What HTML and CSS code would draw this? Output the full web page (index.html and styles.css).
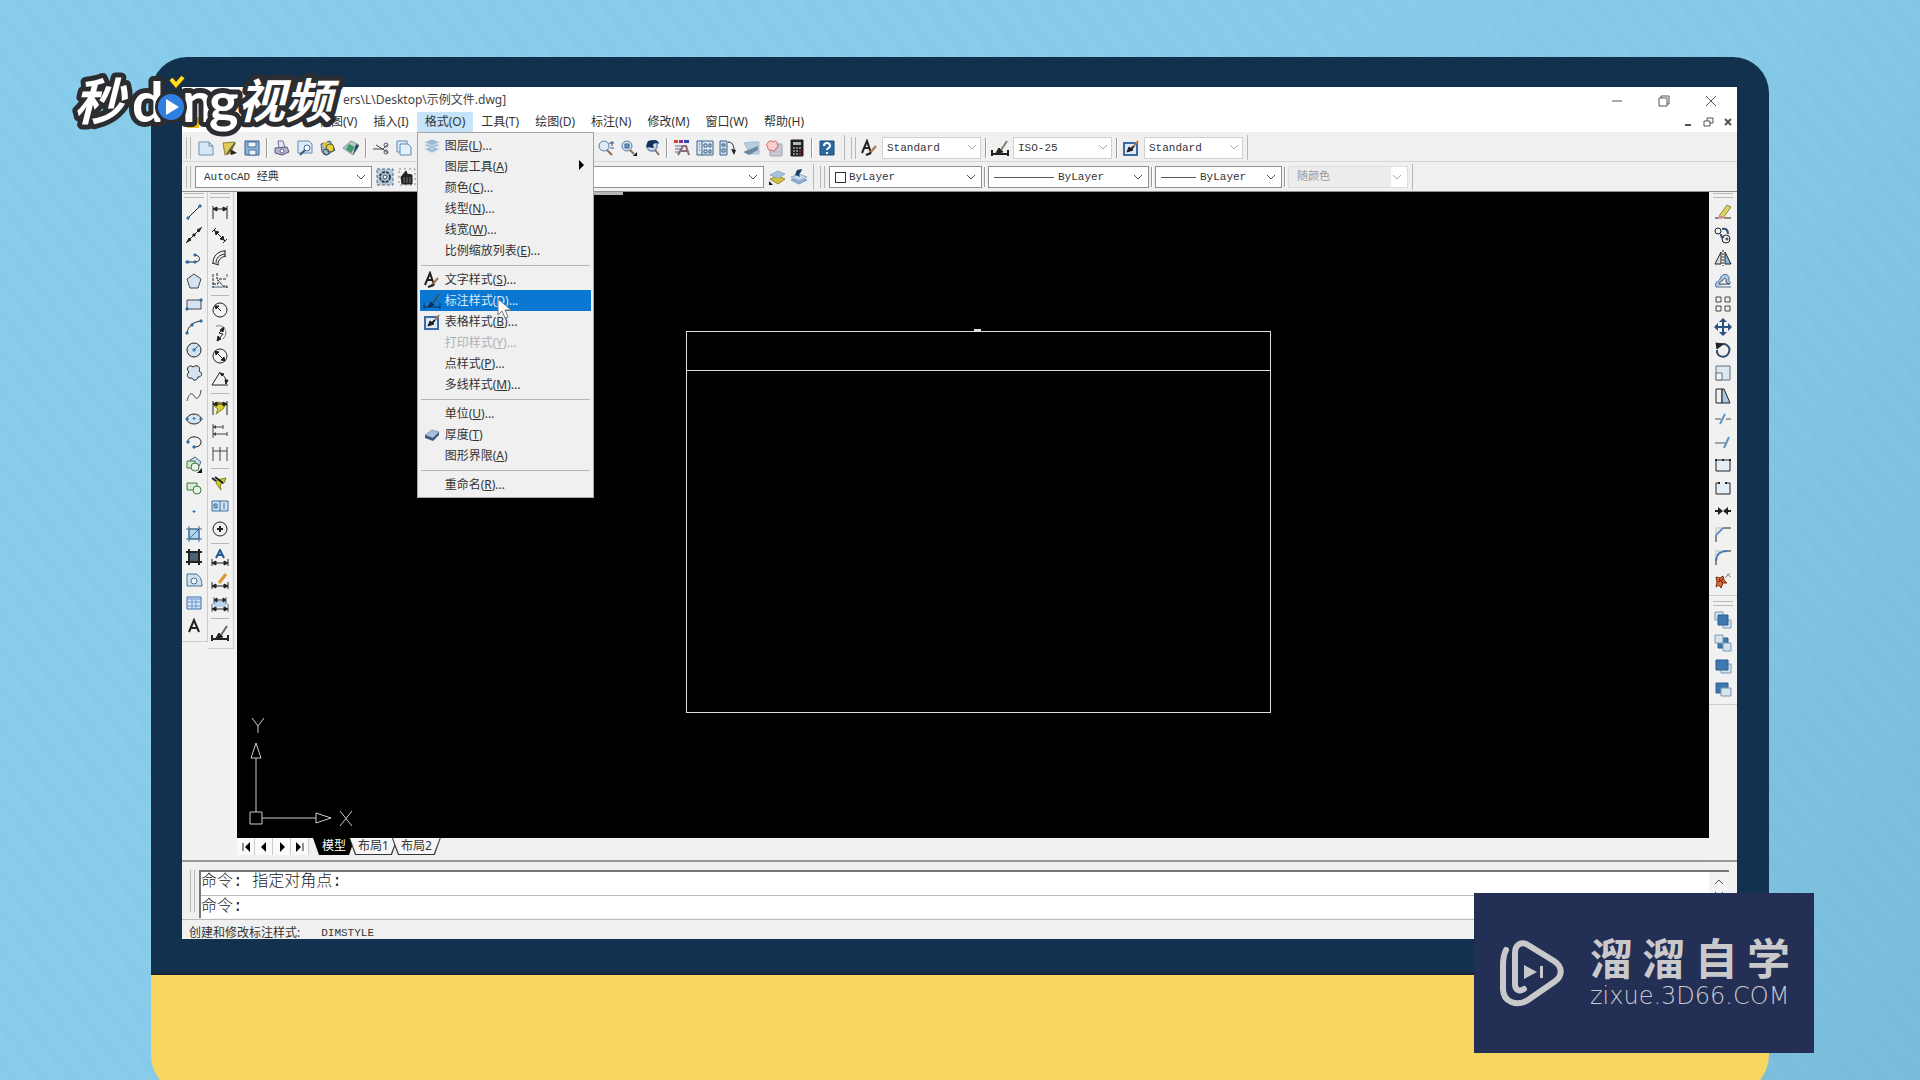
FILE: index.html
```html
<!DOCTYPE html>
<html lang="zh-CN">
<head>
<meta charset="utf-8">
<title>AutoCAD 示例文件.dwg</title>
<link rel="stylesheet" href="styles.css">
</head>
<body>
<div class="desk">
  <div class="bezel">
    <main class="screen">
      <header class="titlebar">
        <h1 class="title">ers\L\Desktop\示例文件.dwg]</h1>
        <div class="window-controls">
          <button aria-label="最小化"><svg class="ico"><path d="M4 9h10"/></svg></button>
          <button aria-label="还原"><svg class="ico"><path d="M4 6h8v8H4zM6 6V4h8v8h-2"/></svg></button>
          <button aria-label="关闭"><svg class="ico"><path d="M4 4l10 10M14 4L4 14"/></svg></button>
        </div>
      </header>

      <nav class="menubar">
        <svg class="ico app-icon"><path d="M2 4h12v11H2z" fill="#f0b81c" stroke="none"/></svg>
        <button class="menu">视图(V)</button>
        <button class="menu">插入(I)</button>
        <div class="menu-holder">
          <button class="menu open">格式(O)</button>
          <div class="dropdown">
            <button class="item"><svg class="ico"><g fill="#9cb9d3" stroke="#dfe9f2"><path d="M1 12l8-3 8 3-8 4z"/><path d="M1 8l8-3 8 3-8 4z"/><path d="M1 5l8-3 8 3-8 4z"/></g></svg>图层(<u>L</u>)...</button>
            <button class="item sub"><span class="ico"></span>图层工具(<u>A</u>)<svg class="arrow"><path d="M1 0l5 5-5 5z"/></svg></button>
            <button class="item"><span class="ico"></span>颜色(<u>C</u>)...</button>
            <button class="item"><span class="ico"></span>线型(<u>N</u>)...</button>
            <button class="item"><span class="ico"></span>线宽(<u>W</u>)...</button>
            <button class="item"><span class="ico"></span>比例缩放列表(<u>E</u>)...</button>
            <hr>
            <button class="item"><svg class="ico"><path d="M2 14L7 2l4 12M4 9h6" stroke-width="2"/><path d="M8 15l7-8" stroke="#a8754c" stroke-width="2"/><path d="M5 16l6-2" stroke-width="2"/></svg>文字样式(<u>S</u>)...</button>
            <button class="item active"><svg class="ico"><path d="M1 11v6M17 11v6M1 15h16" stroke="#0b2d50"/><path d="M5 15l3-5 3 3z" fill="#0b2d50" stroke="#0b2d50"/><path d="M10 11l6-9" stroke="#31566a" stroke-width="2"/></svg>标注样式(<u>D</u>)...
              <svg class="cursor"><path d="M1 1v16l4-4 3 7 3-1-3-7h6z"/></svg></button>
            <button class="item"><svg class="ico"><path d="M2 4h13v12H2z" fill="#dce9f8" stroke="#3c6aa8" stroke-width="2"/><path d="M5 13l2-5 4 3z" fill="#222"/><path d="M8 11l4-4" stroke-width="2"/><path d="M12 7l4-5" stroke="#ad784c" stroke-width="2"/></svg>表格样式(<u>B</u>)...</button>
            <button class="item" disabled><span class="ico"></span>打印样式(<u>Y</u>)...</button>
            <button class="item"><span class="ico"></span>点样式(<u>P</u>)...</button>
            <button class="item"><span class="ico"></span>多线样式(<u>M</u>)...</button>
            <hr>
            <button class="item"><span class="ico"></span>单位(<u>U</u>)...</button>
            <button class="item"><svg class="ico"><path d="M2 9l7-5 7 2-6 6z" fill="#a9bfdb" stroke="#8aa2c4"/><path d="M2 9v3l8 3 6-6V6l-6 6z" fill="#40597f" stroke="none"/></svg>厚度(<u>T</u>)</button>
            <button class="item"><span class="ico"></span>图形界限(<u>A</u>)</button>
            <hr>
            <button class="item"><span class="ico"></span>重命名(<u>R</u>)...</button>
          </div>
        </div>
        <button class="menu">工具(T)</button>
        <button class="menu">绘图(D)</button>
        <button class="menu">标注(N)</button>
        <button class="menu">修改(M)</button>
        <button class="menu">窗口(W)</button>
        <button class="menu">帮助(H)</button>
        <div class="doc-controls">
          <button aria-label="最小化文档"><svg class="ico"><path d="M6 12h6" stroke-width="2"/></svg></button>
          <button aria-label="还原文档"><svg class="ico"><path d="M5 8h6v5H5zM8 8V5h6v5h-3"/></svg></button>
          <button aria-label="关闭文档"><svg class="ico"><path d="M6 6l6 6M12 6l-6 6" stroke-width="2"/></svg></button>
        </div>
      </nav>

      <div class="toolbar-row">
        <div class="toolbar standard">
          <i class="grip"></i>
          <button class="tool" aria-label="新建"><svg class="ico"><path d="M2 3h10l4 4v9H2z" fill="#d5e7f5" stroke="#6d93b8"/><path d="M12 3v4h4" stroke="#6d93b8"/></svg></button>
          <button class="tool" aria-label="打开"><svg class="ico"><path d="M3 4l12-1-4 11-6 2z" fill="#e3c95c" stroke="#8d8038"/><path d="M7 15l8-11" stroke="#5a6b3a" stroke-width="2"/><path d="M10 10l7 4-6 2z" fill="#222" stroke="none"/></svg></button>
          <button class="tool" aria-label="保存"><svg class="ico"><path d="M2 2h14v14H2z" fill="#8fb3d9" stroke="#355f93"/><path d="M5 3h8v5H5zM6 11h7v5H6z" fill="#eef4fa" stroke="#45709f"/></svg></button>
          <i class="sep"></i>
          <button class="tool" aria-label="打印"><svg class="ico"><path d="M5 2h5l2 7H6z" fill="#dce6f4" stroke="#6e7690"/><path d="M2 9l12-1 2 5-7 3-7-2z" fill="#b4b6cc" stroke="#56597a"/><circle cx="9" cy="12" r="2" fill="#fff" stroke="#63668a"/></svg></button>
          <button class="tool" aria-label="打印预览"><svg class="ico"><path d="M2 2h11l3 3v9H2z" fill="#dcebf7" stroke="#5f8bb5"/><circle cx="11" cy="9" r="3" fill="#f6fbff" stroke="#406b97"/><path d="M9 11l-5 5" stroke="#495566" stroke-width="2"/></svg></button>
          <button class="tool" aria-label="发布"><svg class="ico"><path d="M2 5l9-3 5 9-8 5-5-3z" fill="#9fb8c8" stroke="#4a5d78"/><path d="M4 3h5v5H4z" fill="#edbf2f" stroke="none"/><circle cx="11" cy="9" r="4" fill="#e7d23c" stroke="#56603a"/><circle cx="7" cy="13" r="3" stroke="#3b4f70"/></svg></button>
          <button class="tool" aria-label="三维打印"><svg class="ico"><path d="M1 9l8-7 8 4-6 10z" fill="#b5cbd3" stroke="#7e97a3"/><path d="M7 5l6 3-4 6-5-4z" fill="#3f9c6a" stroke="none"/><path d="M11 16l6-9-3-2z" fill="#2c445c" stroke="none"/></svg></button>
          <i class="sep"></i>
          <button class="tool" aria-label="剪切"><svg class="ico"><path d="M1 10h10l4-4M4 6l8 5 4 3" stroke="#444"/><circle cx="14" cy="6" r="2" stroke="#5a5470"/><circle cx="14" cy="13" r="2" stroke="#5a5470"/></svg></button>
          <button class="tool" aria-label="复制"><svg class="ico"><path d="M2 2h10v11H2z" fill="#dcebf7" stroke="#5d89b3"/><path d="M5 5h8l3 3v8H5z" fill="#e3f0fa" stroke="#5d89b3"/></svg></button>
          <button class="tool" aria-label="粘贴"><svg class="ico"><path d="M3 3h12v13H3z"/></svg></button>
          <button class="tool" aria-label="特性匹配"><svg class="ico"><path d="M3 15L15 3"/></svg></button>
          <button class="tool" aria-label="块编辑器"><svg class="ico"><path d="M4 4h10v10H4z"/></svg></button>
          <i class="sep"></i>
          <button class="tool wide" aria-label="放弃"><svg class="ico"><path d="M3 8c6-5 10-2 11 5"/></svg></button>
          <button class="tool wide" aria-label="重做"><svg class="ico"><path d="M15 8c-6-5-10-2-11 5"/></svg></button>
          <i class="sep"></i>
          <button class="tool" aria-label="平移"><svg class="ico"><path d="M9 2v14M2 9h14"/></svg></button>
          <button class="tool" aria-label="缩放"><svg class="ico"><circle cx="8" cy="8" r="5"/></svg></button>
          <button class="tool" aria-label="实时缩放"><svg class="ico"><circle cx="7" cy="7" r="5" fill="#dcebf7" stroke="#5b7fa4"/><path d="M10 11l5 5" stroke="#8c6f58" stroke-width="2"/><path d="M12 4h5M15 2v5M13 9h4" stroke="#35537c"/></svg></button>
          <button class="tool" aria-label="窗口缩放"><svg class="ico"><circle cx="7" cy="7" r="5" fill="#cfe1f1" stroke="#5b7fa4"/><path d="M5 5h4v4H5z" fill="#6f95bb" stroke="#3c6592"/><path d="M10 11l4 4" stroke="#8c6f58" stroke-width="2"/><path d="M17 13v4h-4z" fill="#111" stroke="none"/></svg></button>
          <button class="tool" aria-label="缩放上一个"><svg class="ico"><circle cx="9" cy="7" r="5" fill="#cfe1f1" stroke="#7e9abb" stroke-width="2"/><path d="M12 11l4 5" stroke="#8c6f58" stroke-width="2"/><path d="M3 8l2-6 6-1c3 0 5 2 5 4-3-2-5-1-6 1l1 3z" fill="#16305c" stroke="none"/></svg></button>
          <i class="sep"></i>
          <button class="tool" aria-label="特性"><svg class="ico"><path d="M1 1h4v3H1z" fill="#d5442d" stroke="none"/><path d="M6 1h4v3H6z" fill="#8c2f96" stroke="none"/><path d="M11 1h5v3h-5z" fill="#2f49b0" stroke="none"/><path d="M2 7h7M2 10h6M2 13h5" stroke="#536a8a"/><path d="M5 16l5-9h3l3 9M8 12h7" stroke="#8a6a72" stroke-width="2"/></svg></button>
          <button class="tool" aria-label="设计中心"><svg class="ico"><path d="M1 2h16v14H1z" fill="#d8e7f3" stroke="#3f6184"/><path d="M6 2v14M8 5h3v3H8zM13 5h2v3h-2zM8 11h3v3H8zM13 11h2v3h-2zM3 5h1M3 8h1M3 11h1" stroke="#3f6184"/></svg></button>
          <button class="tool" aria-label="工具选项板"><svg class="ico"><path d="M1 2h7v14H1z" fill="#c9dcec" stroke="#3f6184"/><path d="M3 5h3v2H3zM3 10h3v3H3z" stroke="#3f6184"/><path d="M9 3c4 0 6 3 6 8" stroke="#222"/><path d="M12 10l5 1-2 5z" fill="#222" stroke="none"/></svg></button>
          <button class="tool" aria-label="图纸集"><svg class="ico"><path d="M2 4l8-1h7v12H8z" fill="#b9cddc" stroke="#a9bccb"/><path d="M1 13l15-6v4L7 16z" fill="#6b8aa4" stroke="none"/></svg></button>
          <button class="tool" aria-label="标记集"><svg class="ico"><path d="M5 5h12v12H5z" fill="#c8c9d0" stroke="#a3a5b0"/><path d="M3 4c1-3 4-2 5-1 2-2 5 0 4 2 2 2 1 4-1 4 0 3-3 4-4 2-3 1-5-1-4-3-2-1-2-3 0-4z" fill="#f6cfcf" stroke="#d0525a"/></svg></button>
          <button class="tool" aria-label="快速计算器"><svg class="ico"><path d="M3 1h12v16H3z" fill="#222"/><path d="M5 3h8v3H5z" fill="#a9bfae" stroke="none"/><path d="M5 9h2M8 9h2M11 9h2M5 12h2M8 12h2M5 15h2M8 15h2" stroke="#ddd"/><path d="M11 12h2M11 15h2" stroke="#d33"/></svg></button>
          <i class="sep"></i>
          <button class="tool" aria-label="帮助"><svg class="ico"><path d="M2 2h14v14H2z" fill="#2b6a9e" stroke="#174a75"/><path d="M6 7c0-4 6-4 6 0 0 2-3 2-3 4M9 13v2" stroke="#fff" stroke-width="2"/></svg></button>
        </div>
        <div class="toolbar">
          <i class="grip"></i>
          <button class="tool" aria-label="文字样式"><svg class="ico"><path d="M2 14L7 2l4 12M4 9h6" stroke-width="2"/><path d="M9 15l7-8" stroke="#a8754c" stroke-width="2"/><path d="M6 16l5-2" stroke-width="2"/></svg></button>
          <div class="combo style"><select aria-label="当前文字样式"><option>Standard</option></select><svg class="chev pale"><path d="M1 1l4 4 4-4"/></svg></div>
          <i class="sep"></i>
          <button class="tool" aria-label="标注样式"><svg class="ico"><path d="M1 11v6M17 11v6M1 15h16" stroke-width="2"/><path d="M5 14l3-5 4 4z" fill="#222"/><path d="M10 11l6-9" stroke="#75856a" stroke-width="2"/></svg></button>
          <div class="combo style"><select aria-label="当前标注样式"><option>ISO-25</option></select><svg class="chev pale"><path d="M1 1l4 4 4-4"/></svg></div>
          <i class="sep"></i>
          <button class="tool" aria-label="表格样式"><svg class="ico"><path d="M2 4h13v12H2z" fill="#dce9f8" stroke="#3c6aa8" stroke-width="2"/><path d="M5 13l2-5 4 3z" fill="#222"/><path d="M8 11l4-4" stroke-width="2"/><path d="M12 7l4-5" stroke="#ad784c" stroke-width="2"/></svg></button>
          <div class="combo style"><select aria-label="当前表格样式"><option>Standard</option></select><svg class="chev pale"><path d="M1 1l4 4 4-4"/></svg></div>
        </div>
      </div>

      <div class="toolbar-row second">
        <div class="toolbar">
          <i class="grip"></i>
          <div class="combo workspace-name"><select aria-label="工作空间"><option>AutoCAD 经典</option></select><svg class="chev"><path d="M1 1l4 4 4-4"/></svg></div>
          <button class="tool" aria-label="工作空间设置"><svg class="ico"><path d="M1 1h16v16H1z" fill="#b9cbdb" stroke="#54687c" stroke-dasharray="3 2"/><circle cx="9" cy="9" r="5" stroke="#2f4358" stroke-width="2" stroke-dasharray="3 1"/><circle cx="9" cy="9" r="2" fill="#fff" stroke="#2f4358"/></svg></button>
          <button class="tool" aria-label="我的工作空间"><svg class="ico"><path d="M1 1h16v16H1z" stroke="#888" stroke-dasharray="2 3"/><path d="M3 9l5-6 1 3 5 1v9H4z" fill="#222"/><path d="M6 9v6M9 9v6M12 9v6" stroke="#777"/></svg></button>
        </div>
        <div class="toolbar layers">
          <i class="grip"></i>
          <div class="combo layer-name"><select aria-label="图层"><option></option></select><svg class="chev"><path d="M1 1l4 4 4-4"/></svg></div>
          <button class="tool" aria-label="置为当前图层"><svg class="ico"><path d="M2 11l8-3 7 3-7 5z" fill="#cfc23c" stroke="#938b30"/><path d="M2 7l8-4 7 3-7 4z" fill="#a9c3dc" stroke="#8fabc6"/><path d="M1 17v-4l4 4z" fill="#111" stroke="none"/></svg></button>
          <button class="tool" aria-label="上一个图层"><svg class="ico"><path d="M1 12l8-3 8 3-8 4z" fill="#8fb0d0" stroke="#7b9cbf"/><path d="M1 9l8-3 8 3-8 4z" fill="#c7d9ea" stroke="#93adc6"/><path d="M5 7l2-5 5-1-1 3c-2 1-2 3-1 5L8 8z" fill="#1f3f6d" stroke="none"/></svg></button>
        </div>
        <div class="toolbar">
          <i class="grip"></i>
          <div class="combo color"><span class="swatch"></span><select aria-label="颜色"><option>ByLayer</option></select><svg class="chev"><path d="M1 1l4 4 4-4"/></svg></div>
          <i class="sep"></i>
          <div class="combo linetype"><span class="line"></span><select aria-label="线型"><option>ByLayer</option></select><svg class="chev"><path d="M1 1l4 4 4-4"/></svg></div>
          <i class="sep"></i>
          <div class="combo lineweight"><span class="line"></span><select aria-label="线宽"><option>ByLayer</option></select><svg class="chev"><path d="M1 1l4 4 4-4"/></svg></div>
          <i class="sep"></i>
          <div class="combo plot"><select aria-label="打印样式" disabled><option>随颜色</option></select><svg class="chev pale"><path d="M1 1l4 4 4-4"/></svg></div>
        </div>
      </div>

      <div class="workspace">
        <aside class="dock left">
          <div class="tools">
            <i class="grip-h"></i>
            <button class="tool" aria-label="直线"><svg class="ico"><path d="M3 15L15 3"/><path d="M2 14h2v2H2zM14 2h2v2h-2z" fill="#2b6ca8" stroke="#2b6ca8"/></svg></button>
            <button class="tool" aria-label="构造线"><svg class="ico"><path d="M1 17L17 1"/><path d="M2 16l2-4 2 2zM16 2l-2 4-2-2zM8 8h2v2H8z" fill="#222"/></svg></button>
            <button class="tool" aria-label="多段线"><svg class="ico"><path d="M2 13h8c7 0 5-7 0-7"/><path d="M1 12h3v2H1zM9 12h2v2H9zM9 5h2v2H9z" fill="#2b6ca8" stroke="#2b6ca8"/></svg></button>
            <button class="tool" aria-label="多边形"><svg class="ico"><path d="M9 2l7 5-3 9H5L2 7z" fill="#d4e3ef" stroke="#445"/></svg></button>
            <button class="tool" aria-label="矩形"><svg class="ico"><path d="M2 5h14v9H2z" fill="#d4e3ef" stroke="#445"/><path d="M1 13h2v2H1zM15 4h2v2h-2z" fill="#2b6ca8" stroke="#2b6ca8"/></svg></button>
            <button class="tool" aria-label="圆弧"><svg class="ico"><path d="M2 15C3 8 8 4 16 3"/><path d="M1 14h2v2H1zM6 6h2v2H6zM15 2h2v2h-2z" fill="#2b6ca8" stroke="#2b6ca8"/></svg></button>
            <button class="tool" aria-label="圆"><svg class="ico"><circle cx="9" cy="9" r="7" fill="#d4e3ef"/><path d="M9 9l4-4M8 8h2v2H8z" stroke="#2b6ca8"/></svg></button>
            <button class="tool" aria-label="修订云线"><svg class="ico"><path d="M4 8C0 4 5 0 8 3c4-3 8 0 6 4 4 2 3 6-1 6-1 4-5 4-6 1-5 1-6-3-3-6z" fill="#d4e3ef"/></svg></button>
            <button class="tool" aria-label="样条曲线"><svg class="ico"><path d="M2 14C4 6 7 5 9 9s6 3 7-6" stroke="#445"/></svg></button>
            <button class="tool" aria-label="椭圆"><svg class="ico"><ellipse cx="9" cy="9" rx="7" ry="5" fill="#d4e3ef"/><path d="M1 8h2v2H1zM15 8h2v2h-2zM8 8h2v1H8z" stroke="#2b6ca8"/></svg></button>
            <button class="tool" aria-label="椭圆弧"><svg class="ico"><path d="M3 9c-1-7 14-7 13 1-1 3-3 4-7 4"/><path d="M2 8h2v2H2zM8 13h2v2H8z" fill="#2b6ca8" stroke="#2b6ca8"/></svg></button>
            <button class="tool" aria-label="插入块"><svg class="ico"><path d="M5 4l5-3 6 5-3 6z" fill="#c7dcec" stroke="#456c88"/><path d="M2 5h8v7H2z" fill="#d6e9d1" stroke="#417a41"/><circle cx="10" cy="11" r="4" fill="#eaf3e6" stroke="#3c7a48"/><path d="M17 12v5h-5z" fill="#111" stroke="none"/></svg></button>
            <button class="tool" aria-label="创建块"><svg class="ico"><path d="M2 4h10v7H2z" fill="#d6e9d1" stroke="#417a41"/><circle cx="12" cy="11" r="4" fill="#eaf3e6" stroke="#3c7a48"/></svg></button>
            <button class="tool" aria-label="点"><svg class="ico"><path d="M8 9h2v1H8z" fill="#2b6ca8" stroke="#2b6ca8"/></svg></button>
            <button class="tool" aria-label="图案填充"><svg class="ico"><path d="M4 4h10v10H4z" fill="#b6d2ea" stroke="#3e6c97"/><path d="M4 1v16M14 1v16M1 4h16M1 14h16M5 13l9-9" stroke="#3e6c97"/></svg></button>
            <button class="tool" aria-label="渐变色"><svg class="ico"><path d="M4 4h10v10H4z" fill="#4d6078"/><path d="M4 1v16M14 1v16M1 4h16M1 14h16" stroke-width="2"/></svg></button>
            <button class="tool" aria-label="面域"><svg class="ico"><path d="M2 3h9c3 1 6 5 6 12H2z" fill="#cfe0ef" stroke="#49708f"/><circle cx="9" cy="10" r="3" fill="#f4f8fb" stroke="#49708f"/></svg></button>
            <button class="tool" aria-label="表格"><svg class="ico"><path d="M2 3h14v12H2z" fill="#d7e6f7" stroke="#3f6fae"/><path d="M2 5h14M2 8h14M2 12h14M7 5v10M11 5v10" stroke="#6d97cc"/></svg></button>
            <button class="tool" aria-label="多行文字"><svg class="ico"><path d="M4 15L9 3l5 12M6 11h6" stroke-width="2"/></svg></button>
          </div>
          <div class="tools">
            <i class="grip-h"></i>
            <button class="tool" aria-label="线性标注"><svg class="ico"><path d="M2 3v13M16 3v13M2 6h14"/><path d="M2 6l4-2v4zM16 6l-4-2v4z" fill="#222"/></svg></button>
            <button class="tool" aria-label="对齐标注"><svg class="ico"><path d="M1 6l4-4M12 17l4-4M3 4l11 11"/><path d="M4 5l4 1-3 3zM13 14l-4-1 3-3z" fill="#222"/></svg></button>
            <button class="tool" aria-label="弧长标注"><svg class="ico"><path d="M2 14C2 7 7 2 14 2M7 15c0-4 3-7 8-8M1 14l7 2M14 1v7"/><path d="M5 14c0-5 3-8 9-9"/></svg></button>
            <button class="tool" aria-label="坐标标注"><svg class="ico"><path d="M2 2v14M6 1v6h9M2 12h5V8l5 6h4v2" stroke-dasharray="3 1"/><path d="M1 15h16M16 2v3" stroke="#4d6078"/></svg></button>
            <i class="sep-h"></i>
            <button class="tool" aria-label="半径标注"><svg class="ico"><circle cx="9" cy="9" r="7"/><path d="M10 10L6 6M4 5l4 0-3 3z" fill="#222"/></svg></button>
            <button class="tool" aria-label="折弯标注"><svg class="ico"><path d="M5 2c9-2 13 7 7 13" stroke="#777"/><path d="M13 4L8 9l4 1-5 6"/><path d="M13 3l-4 3 3 2zM6 17l1-5 3 3z" fill="#222"/></svg></button>
            <button class="tool" aria-label="直径标注"><svg class="ico"><circle cx="9" cy="9" r="7"/><path d="M4 4l10 10"/><path d="M4 4l4 1-3 3zM14 14l-4-1 3-3z" fill="#222"/></svg></button>
            <button class="tool" aria-label="角度标注"><svg class="ico"><path d="M9 2L1 15h16M10 4c4 2 5 5 5 10"/><path d="M9 3l4 1-2 2zM14 10l3 0-2 4z" fill="#222"/></svg></button>
            <i class="sep-h"></i>
            <button class="tool" aria-label="快速标注"><svg class="ico"><path d="M7 3l8 2-3 5-7 5 2-5-4-3z" fill="#d8d02c" stroke="#857f1a"/><path d="M2 2v14M16 2v14M2 5h14"/><path d="M2 5l4-2v4zM16 5l-4-2v4z" fill="#222"/></svg></button>
            <button class="tool" aria-label="基线标注"><svg class="ico"><path d="M2 2v14M2 5h10M12 3v4M2 12h14M16 10v4" stroke="#444"/><path d="M2 5l3-2v4zM2 12l3-2v4z" fill="#444" stroke="none"/></svg></button>
            <button class="tool" aria-label="连续标注"><svg class="ico"><path d="M2 2v14M9 2v14M16 2v14M2 6h14" stroke="#444"/></svg></button>
            <i class="sep-h"></i>
            <button class="tool" aria-label="标注间距"><svg class="ico"><path d="M6 6l9-2-2 5-4 1 1 6-5-7z" fill="#d8d02c" stroke="#857f1a"/><path d="M1 4l4 3M4 3l8 6" stroke-width="2"/></svg></button>
            <button class="tool" aria-label="公差"><svg class="ico"><path d="M1 4h16v10H1z" fill="#cfe2f2" stroke="#3f6f9d"/><path d="M9 4v10M13 6v6M3 7h3v4H3zM3 7l3 4" stroke="#3f6f9d"/></svg></button>
            <button class="tool" aria-label="圆心标记"><svg class="ico"><circle cx="9" cy="9" r="7"/><path d="M9 6v6M6 9h6" stroke-width="2"/></svg></button>
            <i class="sep-h"></i>
            <button class="tool" aria-label="编辑标注"><svg class="ico"><path d="M5 9l4-8 4 8M6 6h6" stroke="#245a94" stroke-width="2"/><path d="M1 10v7M17 10v7M1 14h16"/><path d="M1 14l4-2v4zM17 14l-4-2v4z" fill="#222"/></svg></button>
            <button class="tool" aria-label="编辑标注文字"><svg class="ico"><path d="M1 10v7M17 10v7M1 14h16"/><path d="M1 14l4-2v4zM17 14l-4-2v4z" fill="#222"/><path d="M8 11l7-9" stroke="#d79a35" stroke-width="3"/></svg></button>
            <button class="tool" aria-label="标注更新"><svg class="ico"><path d="M3 6h12v6H3z" fill="#b9d3e8" stroke="none"/><path d="M3 2v7M15 2v7M1 9v8M17 9v8" stroke="#3b668f"/><path d="M3 5h12M1 14h16"/><path d="M3 5l3-2v4zM15 5l-3-2v4zM1 14l4-2v4zM17 14l-4-2v4z" fill="#222"/></svg></button>
            <i class="sep-h"></i>
            <button class="tool" aria-label="标注样式管理"><svg class="ico"><path d="M1 11v6M17 11v6M1 15h16" stroke-width="2"/><path d="M5 14l3-5 4 4z" fill="#222"/><path d="M10 11l6-9" stroke="#666" stroke-width="2"/></svg></button>
          </div>
        </aside>

        <section class="view">
          <div class="canvas">
            <svg class="drawing" role="img" aria-label="图形">
              <path d="M357 1h29" stroke="#b5b5b5" stroke-width="3"/>
              <path d="M449 139h584v381H449zM449 178h584"/>
              <path d="M737 138h7" stroke-width="3"/>
            </svg>
            <svg class="ucs" role="img" aria-label="坐标系">
              <path d="M13 95h12v12H13zM19 41v54M25 101h54M19 26l5 15H14zM94 101l-15-5v10zM15 1l6 8 6-8M21 9v7M103 94l12 15M115 94l-12 15"/>
            </svg>
          </div>
          <div class="tabs">
            <button class="nav" aria-label="第一个"><svg class="ico"><path d="M6 5v8"/><path d="M13 4v10L8 9z" fill="#000" stroke="none"/></svg></button>
            <button class="nav" aria-label="上一个"><svg class="ico"><path d="M11 4v10L6 9z" fill="#000" stroke="none"/></svg></button>
            <button class="nav" aria-label="下一个"><svg class="ico"><path d="M7 4v10l5-5z" fill="#000" stroke="none"/></svg></button>
            <button class="nav" aria-label="最后一个"><svg class="ico"><path d="M5 4v10l5-5z" fill="#000" stroke="none"/><path d="M12 5v8"/></svg></button>
            <button class="tab current"><span>模型</span></button>
            <button class="tab"><span>布局1</span></button>
            <button class="tab"><span>布局2</span></button>
          </div>
        </section>

        <aside class="dock right">
          <div class="tools">
            <i class="grip-h"></i>
            <button class="tool" aria-label="删除"><svg class="ico"><path d="M1 15h4M10 15h7"/><path d="M5 13l8-11 4 2-8 11z" fill="#e2d35a" stroke="#8f8a4c"/><path d="M5 12l-1 3 4 1 2-2z" fill="#d68a8a" stroke="none"/></svg></button>
            <button class="tool" aria-label="复制对象"><svg class="ico"><circle cx="4" cy="5" r="3"/><circle cx="12" cy="13" r="4"/><circle cx="13" cy="13" r="1"/><path d="M7 8c0 3 1 4 3 3M8 3c4-1 6 1 6 5" stroke="#2b4f78" stroke-width="2"/></svg></button>
            <button class="tool" aria-label="镜像"><svg class="ico"><path d="M7 3v12H1z" fill="#ddd"/><path d="M11 3v12h6z" fill="#8db7dd"/><path d="M9 1v16" stroke-dasharray="2 1"/></svg></button>
            <button class="tool" aria-label="偏移"><svg class="ico"><path d="M2 15c-2-6 3-5 4-8 2-7 10-5 9 0-1 2 1 3 2 4M2 15h15" fill="#a9cbe8" stroke="#4e6f90"/><path d="M5 12c0-3 3-2 4-4 1-3 4-1 3 1 0 1 1 3 4 3z" fill="#f2f2f2" stroke="#445"/></svg></button>
            <button class="tool" aria-label="阵列"><svg class="ico"><path d="M2 2h5v5H2zM11 2h5v5h-5zM2 11h5v5H2zM11 11h5v5h-5z" stroke="#444"/></svg></button>
            <button class="tool" aria-label="移动"><svg class="ico"><path d="M9 2v14M2 9h14" stroke="#2b527e" stroke-width="2"/><path d="M9 0l4 4H5zM9 18l4-4H5zM0 9l4-4v8zM18 9l-4-4v8z" fill="#2b527e" stroke="none"/></svg></button>
            <button class="tool" aria-label="旋转"><svg class="ico"><path d="M5 5c6-5 12 1 10 6-2 7-13 6-12-2" stroke="#2d4a68" stroke-width="2"/><path d="M2 2l7 1-6 5z" fill="#222"/></svg></button>
            <button class="tool" aria-label="缩放对象"><svg class="ico"><path d="M2 2h14v14H2z" fill="#dbe9f5" stroke="#666e7c"/><path d="M2 9h6v7H2z" fill="#f4f7fa" stroke="#666e7c"/></svg></button>
            <button class="tool" aria-label="拉伸"><svg class="ico"><path d="M2 2h6v14H2z"/><path d="M8 2h2l6 14H8z" fill="#a9c8e3"/></svg></button>
            <button class="tool" aria-label="修剪"><svg class="ico"><path d="M1 9h6M12 9h5" stroke="#555"/><path d="M6 14l5-10" stroke="#5f94c6" stroke-width="2"/></svg></button>
            <button class="tool" aria-label="延伸"><svg class="ico"><path d="M1 10h10" stroke="#555"/><path d="M10 15l5-11" stroke="#5f94c6" stroke-width="2"/></svg></button>
            <button class="tool" aria-label="打断于点"><svg class="ico"><path d="M2 4h14v11H2z" fill="#e4eef6"/><path d="M1 4h2M15 4h2M8 4h2" stroke-width="2"/></svg></button>
            <button class="tool" aria-label="打断"><svg class="ico"><path d="M6 4H2v11h14V4h-4" fill="#e4eef6"/><path d="M5 3v2M12 3v2" stroke-width="2"/></svg></button>
            <button class="tool" aria-label="合并"><svg class="ico"><path d="M1 9h6M11 9h6" stroke-width="2"/><path d="M4 5l5 4-5 4zM14 5L9 9l5 4z" fill="#222" stroke="none"/></svg></button>
            <button class="tool" aria-label="倒角"><svg class="ico"><path d="M2 17v-7M9 3h8"/><path d="M2 10l7-7" stroke="#5f94c6" stroke-width="2"/><path d="M2 9V3h6" stroke="#bbb"/></svg></button>
            <button class="tool" aria-label="圆角"><svg class="ico"><path d="M2 17v-4M13 3h4"/><path d="M2 13C2 7 6 3 13 3" stroke="#3e78ad" stroke-width="2"/><path d="M2 9V3h6" stroke="#bbb"/></svg></button>
            <button class="tool" aria-label="分解"><svg class="ico"><path d="M2 6l4 1 3-2 1 4 3 3-4 0-2 5-2-3-3 2 1-5z" fill="#db6a35" stroke="#7d3218"/><path d="M4 11l5-3M5 8l4 4" stroke="#5b2413"/><path d="M11 7l5-5M13 3l4 3" stroke="#888"/></svg></button>
          </div>
          <div class="tools order">
            <i class="grip-h"></i>
            <button class="tool" aria-label="前置"><svg class="ico"><path d="M1 1h8v8H1zM9 9h8v8H9z" fill="#d6e2ec" stroke="#7b98b5"/><path d="M4 4h10v10H4z" fill="#3f78ae" stroke="#2d5f91"/></svg></button>
            <button class="tool" aria-label="后置"><svg class="ico"><path d="M4 4h10v10H4z" fill="#3f78ae" stroke="#2d5f91"/><path d="M1 1h8v8H1zM9 9h8v8H9z" fill="#d6e2ec" stroke="#7b98b5"/></svg></button>
            <button class="tool" aria-label="置于对象之上"><svg class="ico"><path d="M7 7h10v9H7z" fill="#d6e2ec" stroke="#7b98b5"/><path d="M2 3h12v10H2z" fill="#3f78ae" stroke="#2d5f91"/></svg></button>
            <button class="tool" aria-label="置于对象之下"><svg class="ico"><path d="M2 3h12v10H2z" fill="#3f78ae" stroke="#2d5f91"/><path d="M7 8h10v8H7z" fill="#d6e2ec" stroke="#7b98b5"/></svg></button>
          </div>
        </aside>
      </div>

      <section class="command">
        <i class="grip"></i>
        <div class="console">
          <p class="history">命令: 指定对角点:</p>
          <label class="prompt">命令:<input type="text"></label>
        </div>
        <div class="scroll"><svg class="chev up"><path d="M1 6l4-4 4 4"/></svg><svg class="chev"><path d="M1 1l4 4 4-4"/></svg></div>
      </section>
      <footer class="status"><span>创建和修改标注样式:</span><code>DIMSTYLE</code></footer>
    </main>
  </div>
  <div class="base"></div>

  <svg class="channel" role="img" aria-label="秒dong视频">
    <g class="outline">
      <text x="4" y="50" class="han wide">秒</text>
      <text x="62" y="52" class="latin">d</text>
      <text x="112" y="52" class="latin">n</text>
      <text x="139" y="52" class="latin">g</text>
      <text x="168" y="48" class="han">视频</text>
    </g>
    <circle cx="101" cy="37" r="16" fill="#2b2d30"/>
    <circle cx="101" cy="37" r="13" fill="#2f80e0"/>
    <path d="M96 29v16l13-8z" fill="#fff"/>
    <path d="M101 9l5 6 7-8" fill="none" stroke="#2b2d30" stroke-width="8"/>
    <path d="M101 9l5 6 7-8" fill="none" stroke="#ffe11f" stroke-width="4"/>
  </svg>

  <div class="watermark">
    <svg class="mark"><path d="M24 50c-5 3-9 1-9-5V14c0-9 7-12 13-8l26 16c9 6 9 15 0 21L28 61C17 68 3 63 3 50V26c0-8 1-11 3-15" fill="none" stroke="#c9c9cb" stroke-width="6" stroke-linecap="round"/><path d="M24 26v14l13-7zM40 27h3v12h-3z" fill="#c9c9cb"/></svg>
    <div class="brand">
      <strong><span>溜</span><span>溜</span><span>自</span><span>学</span></strong>
      <small>zixue.3D66.COM</small>
    </div>
  </div>
</div>
</body>
</html>
```
FILE: styles.css
```css
* { box-sizing: border-box; }
body { margin: 0; font: 12px/18px "Noto Sans", "Noto Sans CJK SC", sans-serif; color: #333; }
button { border: 0; padding: 0; background: none; font: inherit; color: inherit; }

.desk {
  position: relative;
  display: flex;
  flex-direction: column;
  height: 100vh;
  min-height: 900px;
  overflow: hidden;
  padding: 57px 151px 0;
  background:
    repeating-linear-gradient(52deg, rgba(255,255,255,.02) 0 5px, rgba(60,140,180,.02) 9px 14px, transparent 18px 23px),
    linear-gradient(125deg, #88cceb 30%, #86c9e8 65%, #79bbda);
}
.bezel {
  flex: 1;
  display: flex;
  min-height: 0;
  padding: 30px 32px 34px 31px;
  background: #11314f;
  border-bottom: 2px solid #182430;
  border-radius: 36px 36px 0 0;
}
.base { flex: none; height: 120px; margin-bottom: -15px; background: #f6d65f; border-radius: 0 0 40px 40px; }
.screen { flex: 1; display: flex; flex-direction: column; min-width: 0; background: #f0f0f0; }

.ico { flex: none; display: block; width: 18px; height: 18px; fill: none; stroke: #222; stroke-width: 1; }
.chev { width: 10px; height: 7px; fill: none; stroke: #555; }
.chev.pale { stroke: #aaa; }

/* title and menus */
.titlebar { display: flex; justify-content: space-between; height: 25px; background: #fff; }
.title { margin: 0; padding: 4px 0 0 161px; font-size: 12px; line-height: 18px; font-weight: 400; color: #444; }
.window-controls { display: flex; gap: 29px; padding: 3px 17px 0 0; }
.window-controls .ico { stroke: #555; }
.menubar { display: flex; align-items: center; height: 20px; padding-left: 3px; background: #fff; }
.app-icon { margin-right: 108px; }
.menu { display: block; height: 20px; padding: 0 8px; white-space: nowrap; }
.menu.open { background: #c5e3f9; }
.menu-holder { position: relative; }
.doc-controls { display: flex; gap: 2px; margin-left: auto; }
.doc-controls .ico { stroke: #555; }

.dropdown {
  position: absolute; z-index: 5; top: 20px; left: 0;
  width: 177px; padding: 2px;
  background: #f0f0f0; border: 1px solid #a5a5a5;
}
.dropdown hr { height: 1px; margin: 4px 1px 3px; border: 0; background: #b5b5b5; }
.item { position: relative; display: flex; align-items: center; width: 100%; height: 21px; padding-left: 3px; white-space: nowrap; }
.item > .ico { margin-right: 4px; }
.item:disabled { color: #b0b0b0; }
.item.active { background: #0a78d2; color: #d9edff; }
.arrow { width: 7px; height: 10px; margin: 0 6px 4px auto; fill: #000; }
.cursor { position: absolute; z-index: 1; left: 77px; top: 8px; width: 16px; height: 22px; fill: #fff; stroke: #777; }

/* toolbars */
.toolbar-row { display: flex; height: 30px; padding: 3px 0 1px 4px; border-bottom: 1px solid #d5d5d5; }
.toolbar-row.second { padding: 2px 0 1px 4px; border-bottom-color: #909090; }
.toolbar { display: flex; align-items: center; gap: 4px; padding-right: 4px; margin-right: 6px; border-right: 1px solid #b8b8b8; }
.toolbar.standard { gap: 5px; padding-right: 8px; }
.toolbar.standard .grip { margin-right: 1px; }
.second .toolbar:last-child { gap: 2px; }
.second .toolbar:last-child .grip { margin-right: 2px; }
.grip { flex: none; width: 5px; height: 22px; border: 1px solid #b8b8b8; border-width: 0 1px; }
.sep { flex: none; width: 2px; height: 20px; background: #9a9a9a; border-right: 1px solid #fff; }
.tool { display: block; width: 18px; height: 18px; }
.tool.wide { width: 20px; }

.combo { display: grid; align-items: center; height: 22px; background: #fff; border: 1px solid #8f8f8f; }
.combo > * { grid-area: 1 / 1; }
.combo .chev { justify-self: end; margin-right: 5px; pointer-events: none; }
.combo select {
  appearance: none; width: 100%; height: 20px; padding: 0 16px 0 4px; border: 0; background: none;
  font: 11px/20px "Liberation Mono", "Noto Sans CJK SC", monospace; color: #333;
}
.combo.style { width: 99px; border-color: #d0d0d0; }
.combo.style .chev { margin-right: 3px; }
.combo.workspace-name { width: 177px; }
.combo.workspace-name select { padding-left: 8px; }
.layers { flex: none; width: 387px; }
.combo.layer-name { flex: 1; }
.layers .tool:last-child { margin-right: 1px; }
.combo.color { width: 153px; }
.combo.color select { padding-left: 19px; }
.swatch { width: 11px; height: 11px; margin-left: 5px; border: 1px solid #333; }
.combo.linetype { width: 161px; }
.combo.linetype select { padding-left: 69px; }
.line { height: 1px; margin-left: 5px; background: #555; }
.linetype .line { width: 60px; }
.combo.lineweight { width: 127px; }
.combo.lineweight select { padding-left: 44px; }
.lineweight .line { width: 35px; }
.combo.plot { width: 120px; border-color: #ddd; background: linear-gradient(90deg, #ededed 102px, #fff 102px); }
.combo.plot select { padding-left: 8px; color: #999; opacity: 1; }

/* drawing area */
.workspace { flex: 1; display: grid; grid-template-columns: 55px minmax(0, 1fr) 28px; min-height: 0; border-bottom: 2px solid #999; }
.dock { min-height: 0; background: #f1f1f1; }
.dock.left { display: flex; align-items: flex-start; }
.tools { display: flex; flex-direction: column; align-items: center; gap: 5px; padding: 1px 3px 6px 2px; border: 1px solid #ccc; border-width: 0 1px 1px 0; }
.dock.right .tools { padding: 1px 3px 6px; border-right: 0; }
.dock.right .order { padding-top: 5px; }
.grip-h { width: 20px; height: 5px; border: 1px solid #bbb; border-width: 1px 0; }
.sep-h { width: 18px; height: 1px; background: #b5b5b5; }
.view { display: flex; flex-direction: column; min-width: 0; padding-bottom: 5px; }
.canvas { position: relative; flex: 1; min-height: 0; background: #000; }
.drawing { position: absolute; inset: 0; width: 100%; height: 100%; fill: none; stroke: #ddd; shape-rendering: crispEdges; }
.ucs { position: absolute; left: 0; bottom: 3px; width: 120px; height: 118px; fill: none; stroke: #ccc; }

.tabs { display: flex; height: 17px; }
.nav { width: 18px; height: 17px; overflow: hidden; background: #fafafa; border-right: 1px solid #ccc; }
.tab { height: 17px; margin-right: -6px; padding: 0 1px 1px; background: #333; clip-path: polygon(0 0, 100% 0, calc(100% - 6px) 100%, 6px 100%); }
.tab span { display: block; padding: 0 8px; height: 16px; line-height: 16px; background: #f6f6f6; clip-path: polygon(0 0, 100% 0, calc(100% - 6px) 100%, 6px 100%); }
.tab.current { margin-left: 4px; background: #000; }
.tab.current span { background: #000; color: #fff; }

/* command line */
.command { display: flex; flex: none; padding: 8px 8px 1px 8px; border-bottom: 1px solid #bbb; }
.command .grip { height: 42px; margin-right: 4px; }
.console { flex: 1; min-width: 0; background: #fff; border: 1px solid #777; border-width: 2px 0 0 2px; font: 300 16px/22px "Liberation Mono", "Noto Sans CJK SC", monospace; color: #222; }
.history { margin: 0; height: 24px; line-height: 20px; border-bottom: 1px solid #bbb; }
.prompt { display: flex; height: 22px; line-height: 22px; }
.prompt input { flex: 1; border: 0; padding: 0; font: inherit; outline: 0; }
.scroll { display: flex; flex-direction: column; gap: 6px; width: 20px; padding: 6px 5px 0; background: #f3f3f3; border-top: 2px solid #777; }
.status { display: flex; flex: none; gap: 21px; height: 19px; padding: 5px 0 0 7px; line-height: 16px; overflow: hidden; }
.status code { font: 11px/16px "Liberation Mono", monospace; }

/* overlays */
.channel { position: absolute; left: 70px; top: 70px; width: 280px; height: 76px; overflow: visible; }
.outline text { fill: #fff; stroke: #2b2d30; stroke-width: 10px; stroke-linejoin: round; paint-order: stroke; font-weight: 700; }
.outline .han { font-family: "Noto Sans CJK SC", sans-serif; font-size: 47px; font-style: italic; }
.outline .han.wide { font-size: 50px; }
.outline .latin { font-family: Lato, sans-serif; font-size: 56px; }
.watermark {
  position: absolute; right: 106px; bottom: 27px;
  display: flex; gap: 26px; width: 340px; height: 160px; padding: 46px 24px 0 26px;
  background: #232f55; color: #c9c9cb;
}
.mark { flex: none; width: 64px; height: 68px; overflow: visible; }
.brand { flex: 1; margin-top: -4px; }
.brand strong { display: flex; justify-content: space-between; font: 700 43px/43px "Noto Sans CJK SC", sans-serif; }
.brand small { display: block; font: 200 24px/36px "DejaVu Sans", sans-serif; }
```
